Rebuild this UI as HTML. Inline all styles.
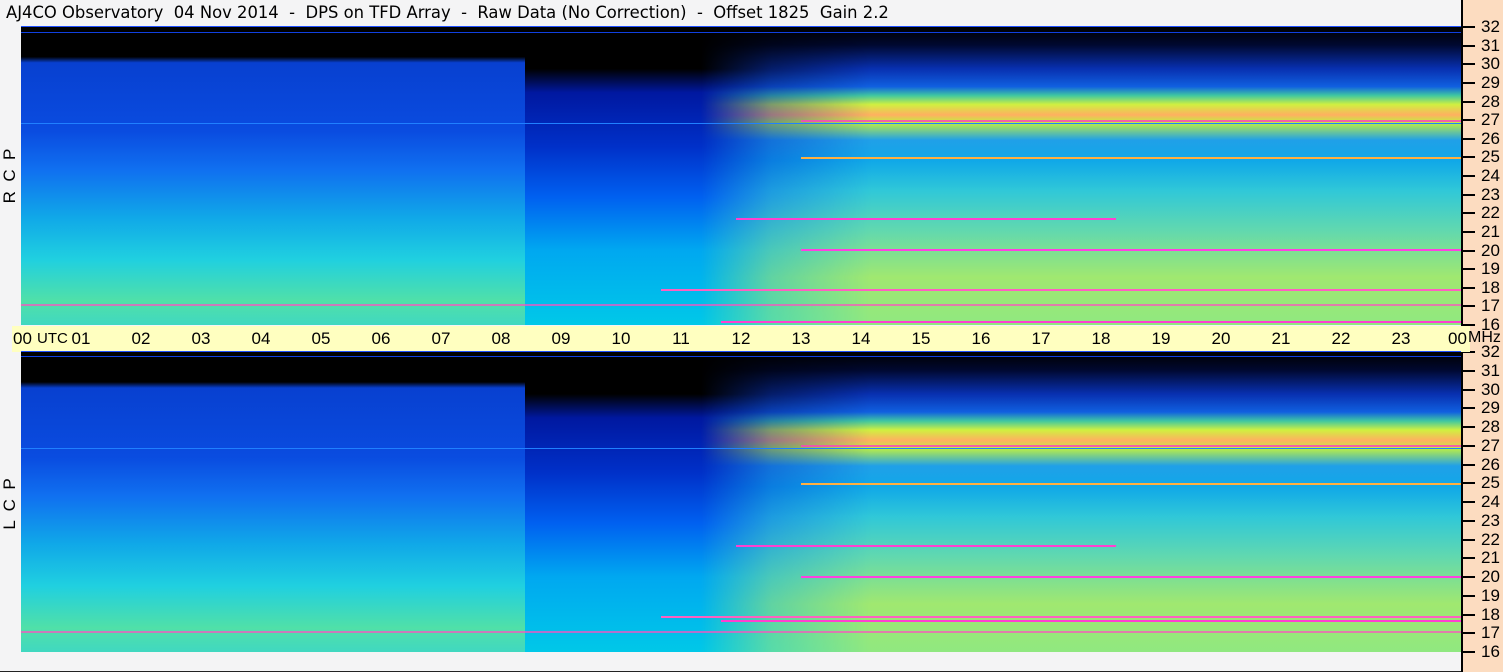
<!DOCTYPE html>
<html><head><meta charset="utf-8"><style>
*{margin:0;padding:0;box-sizing:border-box}
body{width:1503px;height:672px;background:#f4f4f5;position:relative;overflow:hidden;font-family:"Liberation Sans",sans-serif;color:#000;border-right:1px solid #222;border-bottom:1px solid #222}
.t{position:absolute;left:6px;top:3px;font-size:16.4px;white-space:pre;font-family:"DejaVu Sans",sans-serif}
.pan{position:absolute;left:21px;width:1440px;overflow:hidden}
.l{position:absolute;top:0;bottom:0}
.a{left:0;width:504px;background:linear-gradient(#000 0,#000 10%,#0840d0 12%,#0a4ce0 35%,#1070f0 48%,#10a8e8 64%,#20d0e0 78%,#50e0a8 92%,#40d8c0 100%)}
.b{left:504px;width:936px;background:linear-gradient(#000 0,#000 14%,#0018a0 22%,#0030c8 40%,#0060f0 57%,#00a8f0 75%,#00c8e8 100%)}
.c{left:680px;width:760px;background:linear-gradient(#000 0,#000830 6%,#0830b0 14%,#1060e0 20%,#40c8a0 23%,#d0f040 26%,#ffb060 29.5%,#c0f040 32%,#20a0e8 38%,#10a8e8 45%,#30c8d8 55%,#60d8b0 68%,#a0e870 84%,#90e880 100%);-webkit-mask-image:linear-gradient(90deg,transparent 0,rgba(0,0,0,.6) 70px,#000 170px);mask-image:linear-gradient(90deg,transparent 0,rgba(0,0,0,.6) 70px,#000 170px)}
.ln{position:absolute;height:2px}
.ax{position:absolute;left:12px;top:326px;width:1458px;height:26px;background:#ffffc0}
.ax span{position:absolute;top:3px;font-size:17px;transform:translateX(-50%)}
.rs{position:absolute;left:1461px;top:0;width:42px;height:672px;background:#fcdcc0;border-left:2px solid #000}
.rs div{position:absolute;left:18px;font-size:17px;line-height:18px;margin-top:-9px}
.rs i{position:absolute;left:0;width:12px;height:2px;background:#000;margin-top:-1px}
.v{position:absolute;font-size:17px;transform:rotate(-90deg);transform-origin:center;white-space:pre}
</style></head><body>
<div class="t">AJ4CO Observatory  04 Nov 2014  -  DPS on TFD Array  -  Raw Data (No Correction)  -  Offset 1825  Gain 2.2</div>
<div class="rs">
<i style="top:27px"></i><div style="top:27px">32</div><i style="top:45.6px"></i><div style="top:45.6px">31</div><i style="top:64.3px"></i><div style="top:64.3px">30</div><i style="top:82.9px"></i><div style="top:82.9px">29</div><i style="top:101.5px"></i><div style="top:101.5px">28</div><i style="top:120.1px"></i><div style="top:120.1px">27</div><i style="top:138.8px"></i><div style="top:138.8px">26</div><i style="top:157.4px"></i><div style="top:157.4px">25</div><i style="top:176px"></i><div style="top:176px">24</div><i style="top:194.6px"></i><div style="top:194.6px">23</div><i style="top:213.3px"></i><div style="top:213.3px">22</div><i style="top:231.9px"></i><div style="top:231.9px">21</div><i style="top:250.5px"></i><div style="top:250.5px">20</div><i style="top:269.1px"></i><div style="top:269.1px">19</div><i style="top:287.8px"></i><div style="top:287.8px">18</div><i style="top:306.4px"></i><div style="top:306.4px">17</div><i style="top:325px"></i><div style="top:325px">16</div>
<i style="top:352px"></i><div style="top:352px">32</div><i style="top:370.8px"></i><div style="top:370.8px">31</div><i style="top:389.5px"></i><div style="top:389.5px">30</div><i style="top:408.3px"></i><div style="top:408.3px">29</div><i style="top:427px"></i><div style="top:427px">28</div><i style="top:445.8px"></i><div style="top:445.8px">27</div><i style="top:464.5px"></i><div style="top:464.5px">26</div><i style="top:483.3px"></i><div style="top:483.3px">25</div><i style="top:502px"></i><div style="top:502px">24</div><i style="top:520.8px"></i><div style="top:520.8px">23</div><i style="top:539.5px"></i><div style="top:539.5px">22</div><i style="top:558.3px"></i><div style="top:558.3px">21</div><i style="top:577px"></i><div style="top:577px">20</div><i style="top:595.8px"></i><div style="top:595.8px">19</div><i style="top:614.5px"></i><div style="top:614.5px">18</div><i style="top:633.3px"></i><div style="top:633.3px">17</div><i style="top:652px"></i><div style="top:652px">16</div>
</div>
<div style="position:absolute;left:21px;top:26px;width:1440px;height:1px;background:#2050ff"></div>
<div class="pan" style="top:27px;height:298px">
<div class="l a"></div><div class="l b"></div><div class="l c"></div>
<div class="ln" style="left:0;width:1440px;top:5px;height:1px;background:#1040e0"></div>
<div class="ln" style="left:0;width:1440px;top:96px;height:1px;background:#2080ff"></div>
<div class="ln" style="left:780px;width:660px;top:93px;background:#ff40c0;opacity:.8"></div>
<div class="ln" style="left:780px;width:660px;top:130px;background:#ffb040"></div>
<div class="ln" style="left:715px;width:380px;top:191px;background:#ff40d0"></div>
<div class="ln" style="left:780px;width:660px;top:222px;background:#ff40e0"></div>
<div class="ln" style="left:640px;width:800px;top:262px;background:#ff60c0"></div>
<div class="ln" style="left:0;width:1440px;top:277px;background:#ff50c0;opacity:.7"></div>
<div class="ln" style="left:700px;width:740px;top:294px;background:#ff40d0"></div>
</div>
<div class="v" style="left:-20px;top:166px;width:60px;text-align:center">R  C  P</div>
<div class="ax">
<span style="transform:none;left:1px">00</span><span style="transform:none;left:25px;font-size:15px;top:4px">UTC</span>
<span style="left:69px">01</span><span style="left:129px">02</span><span style="left:189px">03</span><span style="left:249px">04</span><span style="left:309px">05</span><span style="left:369px">06</span><span style="left:429px">07</span><span style="left:489px">08</span><span style="left:549px">09</span><span style="left:609px">10</span><span style="left:669px">11</span><span style="left:729px">12</span><span style="left:789px">13</span><span style="left:849px">14</span><span style="left:909px">15</span><span style="left:969px">16</span><span style="left:1029px">17</span><span style="left:1089px">18</span><span style="left:1149px">19</span><span style="left:1209px">20</span><span style="left:1269px">21</span><span style="left:1329px">22</span><span style="left:1389px">23</span><span style="left:1436px;transform:none">00</span>
<span style="left:1456px;transform:none;font-size:16px">MHz</span>
</div>
<div style="position:absolute;left:21px;top:351px;width:1440px;height:1px;background:#2050ff"></div>
<div class="pan" style="top:352px;height:300px">
<div class="l a"></div><div class="l b"></div><div class="l c"></div>
<div class="ln" style="left:0;width:1440px;top:4px;height:1px;background:#1040e0"></div>
<div class="ln" style="left:0;width:1440px;top:96px;height:1px;background:#2080ff"></div>
<div class="ln" style="left:780px;width:660px;top:93px;background:#ff40c0;opacity:.8"></div>
<div class="ln" style="left:780px;width:660px;top:131px;background:#ffb040"></div>
<div class="ln" style="left:715px;width:380px;top:193px;background:#ff40d0"></div>
<div class="ln" style="left:780px;width:660px;top:224px;background:#ff40e0"></div>
<div class="ln" style="left:640px;width:800px;top:264px;background:#ff60c0"></div>
<div class="ln" style="left:0;width:1440px;top:279px;background:#ff50c0;opacity:.7"></div>
<div class="ln" style="left:700px;width:740px;top:268px;background:#ff40d0"></div>
</div>
<div class="v" style="left:-20px;top:494px;width:60px;text-align:center">L  C  P</div>
</body></html>
